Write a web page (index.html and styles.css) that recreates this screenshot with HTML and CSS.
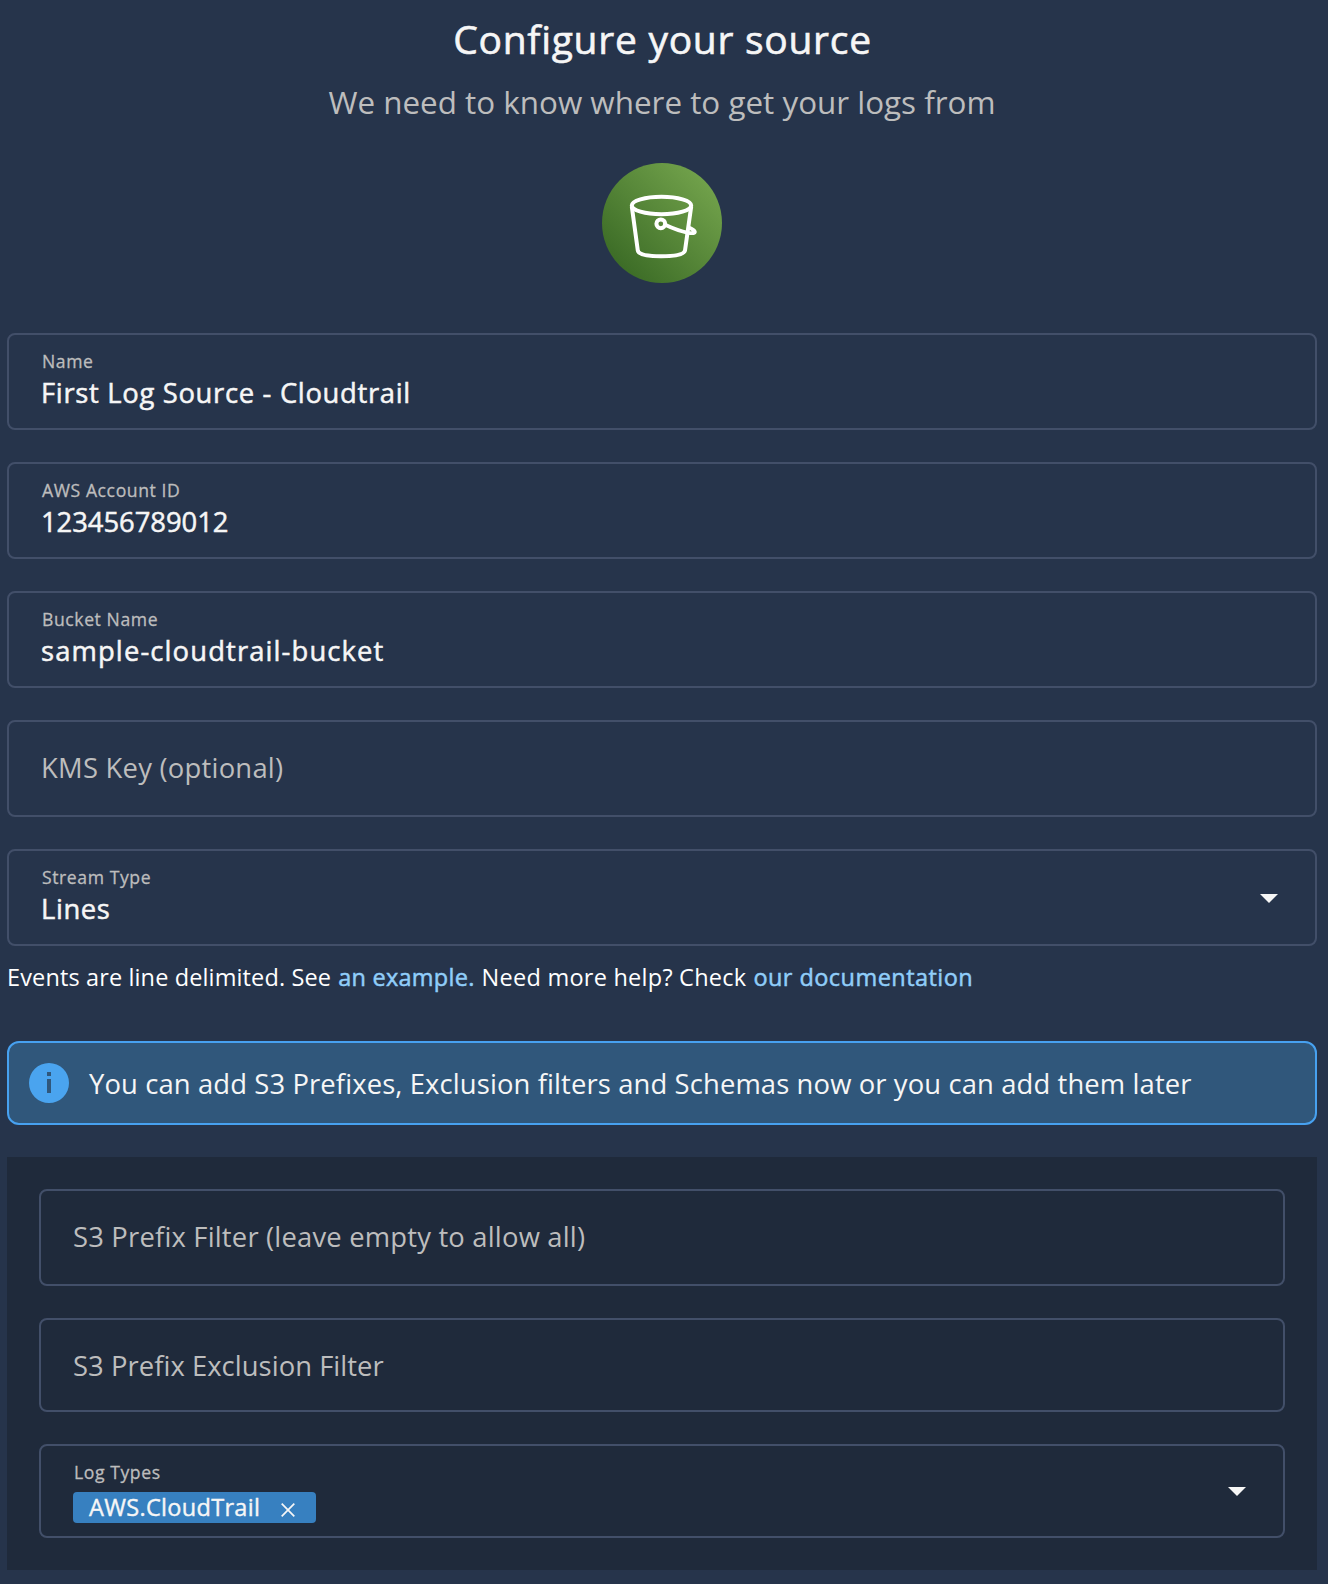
FILE: index.html
```html
<!DOCTYPE html>
<html lang="en">
<head>
<meta charset="utf-8">
<title>Configure your source</title>
<link rel="stylesheet" href="styles.css">
</head>
<body>
<main class="page">
  <header class="intro">
    <h1 class="title">Configure your source</h1>
    <p class="subtitle">We need to know where to get your logs from</p>
    <svg class="bucket" viewBox="0 0 120 120" aria-hidden="true">
      <defs>
        <linearGradient id="green" x1="0.15" y1="0.85" x2="0.85" y2="0.15">
          <stop offset="0" stop-color="#3d6d27"/>
          <stop offset="1" stop-color="#70a04a"/>
        </linearGradient>
      </defs>
      <circle cx="60" cy="60" r="60" fill="url(#green)"/>
      <g fill="none" stroke="#fff" stroke-width="4" stroke-linejoin="round">
        <ellipse cx="59.5" cy="42.5" rx="29.7" ry="8.7"/>
        <path d="M29.8 43.5 L35.8 87.5 Q37 93.300 59 93.300 Q81.500 93.300 83 87.500 L89.200 43.500"/>
        <circle cx="58.8" cy="60.8" r="4.4"/>
        <path d="M63 61.8 Q76 67.8 86 69.8 Q93.500 71 92.800 68.600 Q92 66.500 86.800 64.600" stroke-width="3.8" stroke-linecap="round"/>
      </g>
    </svg>
  </header>

  <section class="fields">
    <div class="field">
      <label class="label">Name</label>
      <div class="value name">First Log Source - Cloudtrail</div>
    </div>
    <div class="field">
      <label class="label">AWS Account ID</label>
      <div class="value account">123456789012</div>
    </div>
    <div class="field">
      <label class="label">Bucket Name</label>
      <div class="value bucket-name">sample-cloudtrail-bucket</div>
    </div>
    <div class="field empty">
      <div class="placeholder kms">KMS Key (optional)</div>
    </div>
    <div class="field">
      <label class="label">Stream Type</label>
      <div class="value stream">Lines</div>
      <i class="caret"></i>
    </div>
  </section>

  <p class="help">
    <span class="events">Events are line delimited. See</span>
    <a class="link example">an example.</a>
    <span class="more">Need more help? Check</span>
    <a class="link docs">our documentation</a>
  </p>

  <div class="info">
    <svg class="info-icon" viewBox="0 0 40 40" aria-hidden="true"><path fill="#4aa4ef" fill-rule="evenodd" d="M20 0a20 20 0 1 1 0 40a20 20 0 0 1 0-40zM18 9v4h4V9zM18 16v14h4V16z"/></svg>
    <span class="info-text">You can add S3 Prefixes, Exclusion filters and Schemas now or you can add them later</span>
  </div>

  <section class="panel">
    <div class="field empty">
      <div class="placeholder prefix">S3 Prefix Filter (leave empty to allow all)</div>
    </div>
    <div class="field empty short">
      <div class="placeholder exclusion">S3 Prefix Exclusion Filter</div>
    </div>
    <div class="field short">
      <label class="label">Log Types</label>
      <div class="chip">
        <span>AWS.CloudTrail</span>
        <svg class="close" viewBox="0 0 14 14" aria-hidden="true"><path d="M.7.7l12.6 12.6M13.3.7L.7 13.3" stroke="#f6f6f6" stroke-width="1.7"/></svg>
      </div>
      <i class="caret"></i>
    </div>
  </section>
</main>
</body>
</html>
```
FILE: styles.css
```css
* { box-sizing: border-box; }

body {
  margin: 0;
  background: #26344b;
  color: #f6f6f6;
  font-family: "Open Sans", sans-serif;
  white-space: nowrap;
}

h1, p { margin: 0; font-weight: 400; }

.page {
  width: 1324px;
  min-height: 1584px;
  padding: 12px 7px 0;
}

.intro {
  display: flex;
  flex-direction: column;
  align-items: center;
}

.title {
  padding-left: 1px;
  font-size: 39px;
  line-height: 53px;
  letter-spacing: 0.72px;
  -webkit-text-stroke: 0.6px currentColor;
}

.subtitle {
  margin-top: 16px;
  color: #bdbdbd;
  font-size: 31.4px;
  line-height: 42px;
}

.bucket {
  width: 120px;
  height: 120px;
  margin-top: 40px;
}

.fields {
  display: grid;
  gap: 32px;
  margin-top: 50px;
}

.field {
  position: relative;
  height: 97px;
  padding: 14px 32px 0;
  border: 2px solid #424f69;
  border-radius: 8px;
}

.short { height: 94px; }

.empty { padding-top: 30px; }

.label {
  display: block;
  padding-left: 1px;
  color: #bdbdbd;
  font-size: 17.6px;
  line-height: 24px;
  letter-spacing: 0.58px;
  -webkit-text-stroke: 0.3px currentColor;
}

.value {
  margin-top: 4px;
  font-size: 27.4px;
  line-height: 32px;
  -webkit-text-stroke: 0.5px currentColor;
}

.name { letter-spacing: 0.68px; }
.account { letter-spacing: -0.04px; }
.bucket-name { letter-spacing: 1.12px; }
.stream { letter-spacing: 0.6px; }

.placeholder {
  color: #bdbdbd;
  font-size: 27.4px;
  line-height: 32px;
}

.kms { letter-spacing: 0.24px; }
.prefix { letter-spacing: 0.19px; }
.exclusion { letter-spacing: 0.05px; }

.caret {
  position: absolute;
  top: 43px;
  right: 37px;
  width: 18px;
  height: 9px;
  background: #f6f6f6;
  clip-path: polygon(0 0, 100% 0, 50% 100%);
}

.short .caret { top: 41px; }

.help {
  display: flex;
  gap: 7px;
  margin-top: 15px;
  color: #fff;
  font-size: 23.5px;
  line-height: 32px;
}

.link {
  color: #90cdf9;
  -webkit-text-stroke: 0.5px currentColor;
}

.events { letter-spacing: 0.13px; }
.example { letter-spacing: 0.26px; }
.more { letter-spacing: 0.25px; }
.docs { letter-spacing: 0.45px; }

.info {
  display: flex;
  align-items: center;
  gap: 20px;
  height: 84px;
  margin-top: 48px;
  padding-left: 20px;
  border: 2px solid #47a1f0;
  border-radius: 12px;
  background: #30577b;
  font-size: 27.4px;
}

.info-icon { width: 40px; height: 40px; }

.info-text { letter-spacing: 0.12px; }

.panel {
  display: grid;
  gap: 32px;
  margin-top: 32px;
  padding: 32px;
  background: #1f2a3b;
}

.chip {
  display: flex;
  align-items: center;
  justify-content: space-between;
  width: 243px;
  height: 31px;
  margin-top: 8px;
  padding: 0 21px 0 16px;
  border-radius: 4px;
  background: #3780c0;
  font-size: 23.5px;
  line-height: 30px;
  letter-spacing: 0.32px;
  -webkit-text-stroke: 0.4px currentColor;
}

.chip span { margin-top: -2px; }

.close { width: 14px; height: 14px; margin-top: 5px; }
```
